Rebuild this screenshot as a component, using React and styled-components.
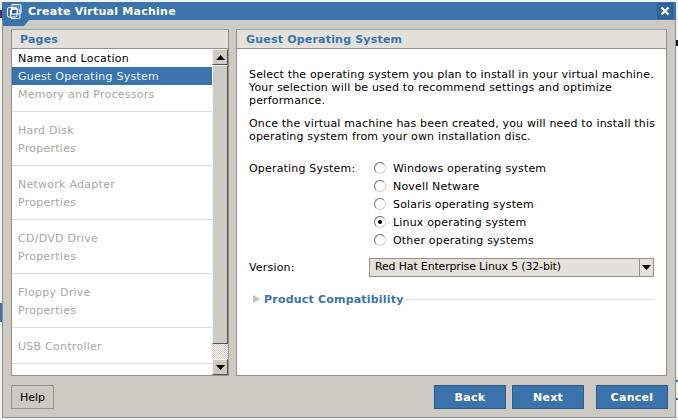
import React from 'react';
import styled, { createGlobalStyle } from 'styled-components';

const GlobalStyle = createGlobalStyle`
  html, body {
    margin: 0;
    padding: 0;
    background: #f1f1ee;
    overflow: hidden;
  }
  * { box-sizing: border-box; }
`;

const BLUE = '#3b74ac';
const FACE = '#cdcac3';
const HEADER = '#e4e1da';

// --- Dialog frame ---
// the gradients are scraps of the windows behind the dialog
const Page = styled.div`
  width: 678px;
  height: 420px;
  padding: 2px 2px 0 2px;
  font-family: "DejaVu Sans", Verdana, sans-serif;
  font-size: 11px;
  letter-spacing: 0.18px;
  color: #000;
  background:
    linear-gradient(#5a2a6a, #5a2a6a) 0 10px / 2px 8px no-repeat,
    linear-gradient(${BLUE}, ${BLUE}) 0 303px / 2px 19px no-repeat,
    linear-gradient(#111, #111) 676px 40px / 2px 6px no-repeat,
    linear-gradient(${BLUE}, ${BLUE}) 676px 380px / 2px 2px no-repeat,
    linear-gradient(${BLUE}, ${BLUE}) 676px 398px / 2px 2px no-repeat,
    #f1f1ee;
`;

const Dialog = styled.div`
  height: 416px;
  display: flex;
  flex-direction: column;
  background: ${FACE};
  border: 1px solid #8f8f8b;
  border-top: none;
`;

const TitleBar = styled.div`
  position: relative;
  height: 18px;
  flex: none;
  display: flex;
  align-items: center;
  justify-content: space-between;
  margin: 0 -1px;
  padding: 0 3px 0 26px;
  background: ${BLUE};
  color: #fff;
  font-weight: bold;
  font-size: 11px;
  letter-spacing: 0.25px;
`;

const TitleTab = styled.svg`
  position: absolute;
  left: 1px;
  top: 18px;
  width: 26px;
  height: 6px;
`;

const TitleIcon = styled.svg`
  position: absolute;
  left: 5px;
  top: 2px;
  width: 15px;
  height: 15px;
`;

const CloseBox = styled.div`
  width: 16px;
  height: 16px;
  display: flex;
  align-items: center;
  justify-content: center;
  background: #34669a;
  border: 1px solid #2c5a8a;
`;

const Body = styled.div`
  height: 347px;
  flex: none;
  display: flex;
  gap: 7px;
  margin: 9px 5px 0 8px;
`;

// --- Panels ---
const Panel = styled.div`
  width: ${({ $width }) => $width}px;
  flex: none;
  display: flex;
  flex-direction: column;
  border: 1px solid #94928d;
  border-top-color: #a3a19c;
  background: #fff;
`;

const PanelHeader = styled.div`
  height: 19px;
  flex: none;
  padding: 1px 0 0 ${({ $pad }) => $pad}px;
  display: flex;
  align-items: center;
  background: ${HEADER};
  border-bottom: 1px solid #94928d;
  color: ${BLUE};
  font-weight: bold;
  font-size: 11px;
  letter-spacing: 0.2px;
`;

const PagesBody = styled.div`
  flex: 1;
  display: flex;
  min-height: 0;
`;

const PageList = styled.div`
  flex: 1;
  min-width: 0;
`;

const Section = styled.div`
  padding: ${({ $first }) => ($first ? '0 0 8px' : '9px 0 8px')};
  border-bottom: 1px solid #dedcd6;
`;

const PageRow = styled.div`
  height: 18px;
  line-height: 20px;
  padding-left: 6px;
  white-space: nowrap;
  letter-spacing: 0.26px;
  background: ${({ $state }) => ($state === 'active' ? BLUE : 'transparent')};
  color: ${({ $state }) =>
    $state === 'active' ? '#eef3f8' : $state === 'done' ? '#000' : '#a9a7a3'};
`;

// --- Scrollbar ---
const Scrollbar = styled.div`
  width: 16px;
  flex: none;
  display: flex;
  flex-direction: column;
  background: repeating-conic-gradient(#cdcac3 0 25%, #fff 0 50%) 0 0 / 2px 2px;
`;

const ScrollButton = styled.div`
  height: ${({ $h }) => $h}px;
  flex: none;
  display: flex;
  align-items: center;
  justify-content: center;
  background: ${FACE};
  border: 1px solid;
  border-color: #f2f1ee #55534f #55534f #f2f1ee;
`;

const ScrollThumb = styled.div`
  height: 279px;
  flex: none;
  background: ${FACE};
  border: 1px solid;
  border-color: #f2f1ee #55534f #55534f #f2f1ee;
`;

const Spacer = styled.div`
  flex: 1;
`;

// --- Guest OS content ---
const Content = styled.div`
  padding: 19px 12px 0 12px;
`;

const Paragraph = styled.p`
  margin: 0 0 10px;
  line-height: 13px;
  white-space: nowrap;
`;

const FormRow = styled.div`
  display: flex;
  margin-top: ${({ $top }) => $top}px;
`;

const FormLabel = styled.div`
  width: 120px;
  flex: none;
  padding-top: 1px;
  line-height: 18px;
`;

const RadioList = styled.div`
  display: flex;
  flex-direction: column;
`;

const RadioRow = styled.label`
  height: 18px;
  display: flex;
  align-items: center;
  gap: 7px;
  margin-left: 5px;
`;

const RadioMark = styled.span`
  width: 12px;
  height: 12px;
  flex: none;
  display: flex;
  align-items: center;
  justify-content: center;
  border-radius: 50%;
  background: #fff;
  border: 1px solid;
  border-color: #6f6d69 #d5d3ce #d5d3ce #6f6d69;

  &::after {
    content: '';
    width: 4px;
    height: 4px;
    border-radius: 50%;
    background: ${({ $on }) => ($on ? '#000' : 'transparent')};
  }
`;

const SelectBox = styled.div`
  width: 286px;
  height: 19px;
  display: flex;
  background: ${HEADER};
  border: 1px solid #94928d;
`;

const SelectText = styled.div`
  flex: 1;
  line-height: 16px;
  padding-left: 5px;
  white-space: nowrap;
  letter-spacing: -0.17px;
`;

const SelectArrow = styled.div`
  width: 14px;
  flex: none;
  display: flex;
  align-items: center;
  justify-content: center;
  border-left: 1px solid #94928d;
`;

const Disclosure = styled.div`
  display: flex;
  align-items: center;
  margin-top: 13px;
  height: 18px;
`;

const DisclosureArrow = styled.svg`
  width: 7px;
  height: 8px;
  flex: none;
  margin: 0 4px 0 4px;
`;

const DisclosureTitle = styled.div`
  color: ${BLUE};
  font-weight: bold;
  letter-spacing: 0.2px;
  white-space: nowrap;
`;

const DisclosureLine = styled.div`
  flex: 1;
  height: 1px;
  margin-left: 2px;
  background: #dedcd6;
`;

// --- Footer ---
const Footer = styled.div`
  flex: 1;
  display: flex;
  align-items: flex-start;
  padding: 9px 7px 0 8px;
`;

const HelpButton = styled.button`
  width: 43px;
  height: 24px;
  padding: 0;
  font: inherit;
  color: #000;
  background: ${FACE};
  border: 1px solid #94928d;
`;

const ActionButton = styled.button`
  width: 72px;
  height: 24px;
  padding: 0;
  margin-left: ${({ $gap }) => $gap}px;
  font: inherit;
  font-weight: bold;
  letter-spacing: 0.3px;
  color: #fff;
  background: ${BLUE};
  border: 1px solid #2c5a8a;
`;

const pageSections = [
  ['Hard Disk', 'Properties'],
  ['Network Adapter', 'Properties'],
  ['CD/DVD Drive', 'Properties'],
  ['Floppy Drive', 'Properties'],
];

const osOptions = [
  'Windows operating system',
  'Novell Netware',
  'Solaris operating system',
  'Linux operating system',
  'Other operating systems',
];

const Triangle = ({ points }) => (
  <svg width="9" height="5" viewBox="0 0 9 5">
    <polygon points={points} fill="#000" />
  </svg>
);

export default function App() {
  return (
    <Page>
      <GlobalStyle />
      <Dialog>
        <TitleBar>
          <TitleTab viewBox="0 0 26 6">
            <polygon points="0,0 26,0 21,6 0,6" fill={BLUE} />
          </TitleTab>
          <TitleIcon viewBox="0 0 15 15" fill="none" stroke="#fff" strokeWidth="1">
            <rect x="4.5" y="0.5" width="9.5" height="9.5" rx="1.5" fill="#5a8cc0" />
            <rect x="0.5" y="3.5" width="9.5" height="9.5" rx="1.5" />
            <rect x="4.5" y="4.5" width="5.5" height="5.5" fill="#2c5a8a" />
            <rect x="3.5" y="5.5" width="9.5" height="9" rx="1.5" />
          </TitleIcon>
          Create Virtual Machine
          <CloseBox>
            <svg width="10" height="10" viewBox="0 0 10 10">
              <path d="M1.5 1.5 L8.5 8.5 M8.5 1.5 L1.5 8.5" stroke="#fff" strokeWidth="2.2" />
            </svg>
          </CloseBox>
        </TitleBar>

        <Body>
          <Panel $width={218}>
            <PanelHeader $pad={8}>Pages</PanelHeader>
            <PagesBody>
              <PageList>
                <Section $first>
                  <PageRow $state="done">Name and Location</PageRow>
                  <PageRow $state="active">Guest Operating System</PageRow>
                  <PageRow>Memory and Processors</PageRow>
                </Section>
                {pageSections.map((rows) => (
                  <Section key={rows[0]}>
                    {rows.map((r) => (
                      <PageRow key={r}>{r}</PageRow>
                    ))}
                  </Section>
                ))}
                <Section>
                  <PageRow>USB Controller</PageRow>
                </Section>
              </PageList>
              <Scrollbar>
                <ScrollButton $h={16}>
                  <Triangle points="4.5,0 9,5 0,5" />
                </ScrollButton>
                <ScrollThumb />
                <Spacer />
                <ScrollButton $h={16}>
                  <Triangle points="0,0 9,0 4.5,5" />
                </ScrollButton>
              </Scrollbar>
            </PagesBody>
          </Panel>

          <Panel $width={431}>
            <PanelHeader $pad={9}>Guest Operating System</PanelHeader>
            <Content>
              <Paragraph>
                Select the operating system you plan to install in your virtual machine.
                <br />
                Your selection will be used to recommend settings and optimize
                <br />
                performance.
              </Paragraph>
              <Paragraph>
                Once the virtual machine has been created, you will need to install this
                <br />
                operating system from your own installation disc.
              </Paragraph>
              <FormRow $top={16}>
                <FormLabel>Operating System:</FormLabel>
                <RadioList>
                  {osOptions.map((o) => (
                    <RadioRow key={o}>
                      <RadioMark $on={o.startsWith('Linux')} />
                      {o}
                    </RadioRow>
                  ))}
                </RadioList>
              </FormRow>
              <FormRow $top={9}>
                <FormLabel>Version:</FormLabel>
                <SelectBox>
                  <SelectText>Red Hat Enterprise Linux 5 (32-bit)</SelectText>
                  <SelectArrow>
                    <Triangle points="0,0 9,0 4.5,5" />
                  </SelectArrow>
                </SelectBox>
              </FormRow>
              <Disclosure>
                <DisclosureArrow viewBox="0 0 7 8">
                  <polygon points="0,0 7,4 0,8" fill="#c5c3bd" />
                </DisclosureArrow>
                <DisclosureTitle>Product Compatibility</DisclosureTitle>
                <DisclosureLine />
              </Disclosure>
            </Content>
          </Panel>
        </Body>

        <Footer>
          <HelpButton>Help</HelpButton>
          <Spacer />
          <ActionButton>Back</ActionButton>
          <ActionButton $gap={6}>Next</ActionButton>
          <ActionButton $gap={12}>Cancel</ActionButton>
        </Footer>
      </Dialog>
    </Page>
  );
}
